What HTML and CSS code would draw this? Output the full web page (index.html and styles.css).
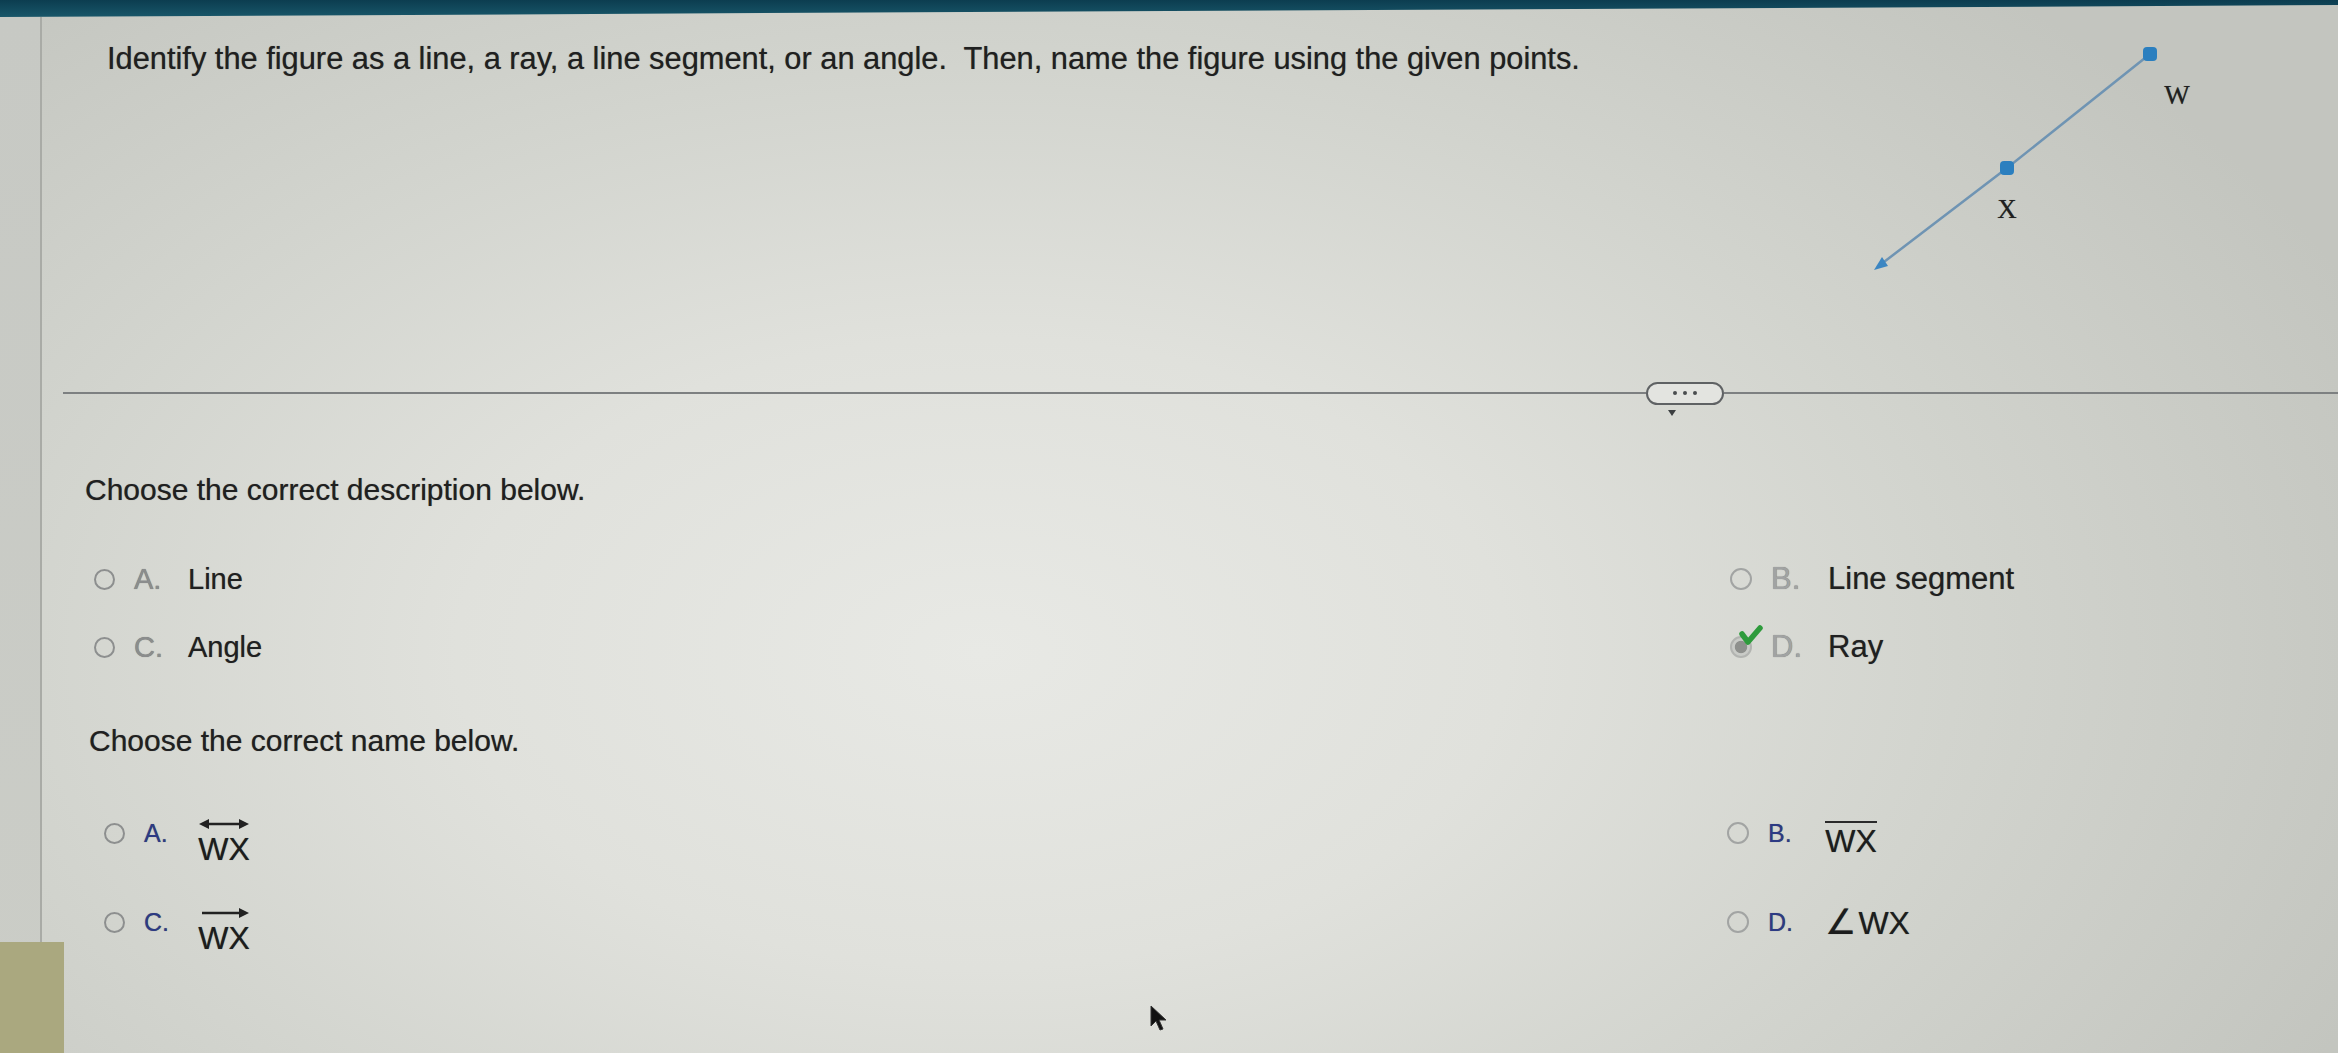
FILE: index.html
```html
<!DOCTYPE html>
<html lang="en">
<head>
<meta charset="utf-8">
<title>Identify the figure</title>
<link rel="stylesheet" href="styles.css">
</head>
<body>
<div class="screen">
  <div class="topbar"></div>
  <div class="frame">
    <aside class="rail"><div class="rail-fill"></div></aside>
    <main class="content">
      <section class="prompt">
        <p class="question">Identify the figure as a line, a ray, a line segment, or an angle.&nbsp; Then, name the figure using the given points.</p>
        <svg class="figure" width="380" height="290" viewBox="0 0 380 290">
          <polyline points="320,26 177,140 50,237" fill="none" stroke="#6f94b3" stroke-width="2.5"/>
          <polygon points="44,242 58,238 52,229" fill="#3c86c2"/>
          <rect x="313" y="19" width="14" height="14" rx="4" fill="#2b7fbf"/>
          <rect x="170" y="133" width="14" height="14" rx="4" fill="#2b7fbf"/>
          <text x="347" y="76" class="pt">W</text>
          <text x="177" y="190" class="pt">X</text>
        </svg>
      </section>

      <div class="divider">
        <span class="rule rule-left"></span>
        <span class="more"><i></i><i></i><i></i></span>
        <span class="rule rule-right"></span>
      </div>

      <section class="part">
        <p class="instruction ins-1">Choose the correct description below.</p>
        <div class="choices choices-1">
          <div class="choice"><span class="radio"></span><span class="letter">A.</span><span class="answer">Line</span></div>
          <div class="choice right"><span class="radio"></span><span class="letter">B.</span><span class="answer">Line segment</span></div>
          <div class="choice"><span class="radio"></span><span class="letter">C.</span><span class="answer">Angle</span></div>
          <div class="choice right"><span class="radio selected"><svg class="check" width="24" height="20" viewBox="0 0 24 20"><path d="M3 9 L9 17 L21 3" fill="none" stroke="#2e9b3c" stroke-width="5.5" stroke-linejoin="round" stroke-linecap="round"/></svg></span><span class="letter">D.</span><span class="answer">Ray</span></div>
        </div>
      </section>

      <section class="part">
        <p class="instruction ins-2">Choose the correct name below.</p>
        <div class="choices choices-2">
          <div class="choice"><span class="radio"></span><span class="letter blue">A.</span>
            <span class="name arrowed"><svg class="mark" width="52" height="14" viewBox="0 0 52 14"><line x1="8" y1="7" x2="44" y2="7" stroke="#222" stroke-width="2.5"/><polygon points="1,7 11,2 11,12" fill="#222"/><polygon points="51,7 41,2 41,12" fill="#222"/></svg><span class="txt">WX</span></span></div>
          <div class="choice right"><span class="radio"></span><span class="letter blue">B.</span>
            <span class="name"><span class="bar"></span><span class="txt">WX</span></span></div>
          <div class="choice"><span class="radio"></span><span class="letter blue">C.</span>
            <span class="name arrowed"><svg class="mark" width="52" height="14" viewBox="0 0 52 14"><line x1="4" y1="7" x2="44" y2="7" stroke="#222" stroke-width="2.5"/><polygon points="51,7 41,2 41,12" fill="#222"/></svg><span class="txt">WX</span></span></div>
          <div class="choice right"><span class="radio"></span><span class="letter blue">D.</span>
            <span class="name plain"><span class="txt"><span class="angle">∠</span>WX</span></span></div>
        </div>
      </section>
    </main>
  </div>
  <svg class="cursor" width="22" height="28" viewBox="0 0 22 28"><path d="M1 1 L1 21 L6 16 L10 25 L13 24 L9 15 L16 15 Z" fill="#111" stroke="#333" stroke-width="1"/></svg>
</div>
</body>
</html>
```

FILE: styles.css
```css
html, body {
  margin: 0;
  padding: 0;
}

.screen {
  position: relative;
  width: 2338px;
  height: 1053px;
  overflow: hidden;
  font-family: "Liberation Sans", Arial, sans-serif;
  color: #1f2020;
  text-shadow: 0 0 0.7px rgba(20, 20, 20, 0.55);
  background:
    radial-gradient(ellipse 1500px 900px at 42% 62%, #e8e9e5 0%, #e0e1dc 35%, #d2d4ce 65%, #c3c5bf 100%);
}

.topbar {
  height: 17px;
  background: linear-gradient(180deg, #0c3d50 0%, #185669 100%);
  clip-path: polygon(0 0, 100% 0, 100% 30%, 0 100%);
}

.frame {
  display: flex;
  height: 1036px;
}

.rail {
  width: 40px;
  flex: none;
  border-right: 2px solid #a9aba6;
  background: linear-gradient(180deg, #c7c9c4, #cbcdc7);
  display: flex;
  flex-direction: column;
  justify-content: flex-end;
}

.rail-fill {
  width: 64px;
  height: 111px;
  background: #aaa87f;
}

.content {
  flex: 1;
  display: flex;
  flex-direction: column;
}

/* prompt */
.prompt {
  height: 365px;
  display: flex;
  align-items: flex-start;
}

.question {
  margin: 0;
  padding: 24px 0 0 65px;
  font-size: 30.8px;
  line-height: 35px;
  color: #1f2020;
  white-space: nowrap;
}

.figure {
  flex: none;
  margin: 11px 128px 0 auto;
}

.pt {
  font-family: "Liberation Serif", "Times New Roman", serif;
  font-size: 27px;
  fill: #1f1f1f;
  text-anchor: middle;
}

/* divider */
.divider {
  height: 22px;
  display: flex;
  align-items: center;
}

.rule {
  height: 2px;
  background: #7d8081;
}

.rule-left {
  width: 1583px;
  margin-left: 21px;
  flex: none;
}

.rule-right {
  flex: 1;
}

.more {
  position: relative;
  box-sizing: border-box;
  width: 78px;
  height: 23px;
  border: 2.5px solid #5f6264;
  border-radius: 12px;
  background: #e3e4e0;
  display: flex;
  align-items: center;
  justify-content: center;
  gap: 6px;
}

.more i {
  width: 4px;
  height: 4px;
  border-radius: 50%;
  background: #4a4d4f;
}

.more::after {
  content: "";
  position: absolute;
  left: 20px;
  top: 26px;
  border-left: 4px solid transparent;
  border-right: 4px solid transparent;
  border-top: 6px solid #3c3f41;
}

/* parts */
.instruction {
  margin: 0;
  font-size: 30px;
  line-height: 36px;
  color: #1f2020;
}

.ins-1 {
  margin-top: 68px;
  padding-left: 43px;
}

.ins-2 {
  margin-top: 58px;
  padding-left: 47px;
}

.choices {
  display: grid;
}

.choices-1 {
  margin-top: 53px;
  padding-left: 52px;
  grid-template-columns: 1636px auto;
  row-gap: 32px;
}

.choices-2 {
  margin-top: 49px;
  padding-left: 62px;
  grid-template-columns: 1623px auto;
  row-gap: 39px;
}

.choice {
  display: flex;
  align-items: center;
  height: 36px;
  font-size: 29px;
}

.choice.right {
  font-size: 31px;
}

.choices-2 .choice {
  height: 50px;
}

.radio {
  position: relative;
  box-sizing: border-box;
  flex: none;
  width: 21px;
  height: 21px;
  border: 2px solid #8d8f8f;
  border-radius: 50%;
  margin-right: 19px;
}

.right .radio {
  width: 22px;
  height: 22px;
  border-color: #a2a4a3;
}

.radio.selected {
  border-color: #b2b4b1;
  background: radial-gradient(circle, #8e908d 0 45%, #c9cbc7 52%);
}

.check {
  position: absolute;
  left: 7px;
  top: -13px;
}

.letter {
  flex: none;
  width: 54px;
  color: #8b8d8d;
}

.right .letter {
  width: 57px;
  color: #a1a3a3;
}

.letter.blue {
  font-size: 25px;
  color: #2c3a84;
}

.right .letter.blue {
  color: #2c3a84;
}

.answer {
  color: #1f2020;
}

.name {
  display: inline-flex;
  flex-direction: column;
  align-items: center;
  gap: 2px;
  color: #1c1d1d;
}

.name.arrowed {
  margin-top: 15px;
}

.name .txt {
  font-size: 32px;
  line-height: 32px;
}

.angle {
  font-family: "DejaVu Sans", sans-serif;
  font-size: 35px;
  margin-right: 2px;
}

.mark {
  display: block;
}

.bar {
  width: 52px;
  height: 2px;
  margin-top: 12px;
  background: #2a2a2a;
}

.cursor {
  position: absolute;
  left: 1150px;
  top: 1005px;
}
```
